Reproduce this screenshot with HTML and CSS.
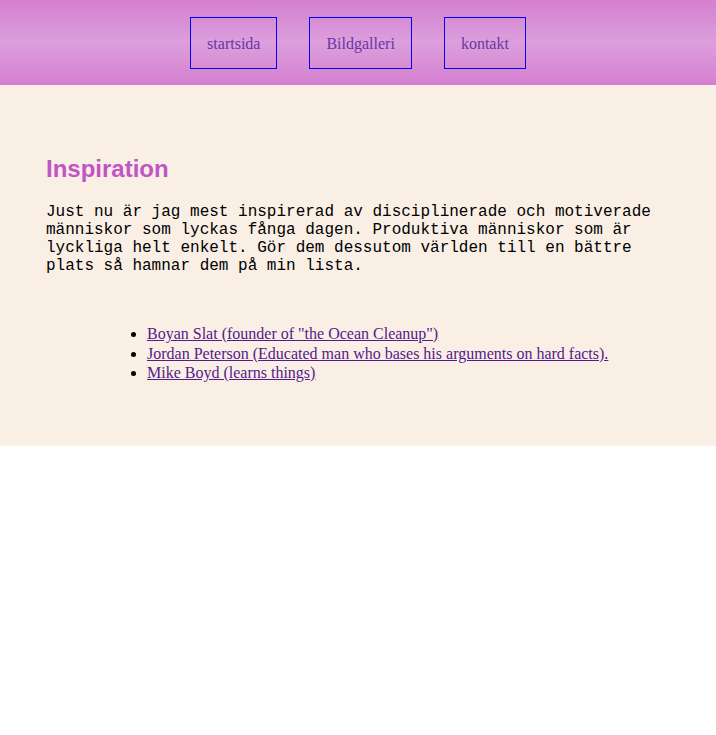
FILE: index.html
```html
<!DOCTYPE html>
<html lang="sv">
<head>
<meta charset="utf-8">
<title>Inspiration</title>
<link rel="stylesheet" href="styles.css">
</head>
<body>
<header class="site-header">
  <nav class="nav">
    <a class="nav-link" href="#">startsida</a>
    <a class="nav-link" href="#">Bildgalleri</a>
    <a class="nav-link" href="#">kontakt</a>
  </nav>
</header>
<main class="content">
  <h2 class="title">Inspiration</h2>
  <p class="intro">Just nu är jag mest inspirerad av disciplinerade och motiverade människor som lyckas fånga dagen. Produktiva människor som är lyckliga helt enkelt. Gör dem dessutom världen till en bättre plats så hamnar dem på min lista.</p>
  <ul class="people">
    <li><a href="#">Boyan Slat (founder of "the Ocean Cleanup")</a></li>
    <li><a href="#">Jordan Peterson (Educated man who bases his arguments on hard facts).</a></li>
    <li><a href="#">Mike Boyd (learns things)</a></li>
  </ul>
</main>
</body>
</html>
```

FILE: styles.css
```css
html, body {
  margin: 0;
  padding: 0;
  background: #ffffff;
}

body {
  font-family: "Liberation Serif", "Times New Roman", serif;
  font-size: 16px;
}

.site-header {
  background: linear-gradient(to bottom, #d47fcf 0%, #dc9fdc 50%, #d47fcf 100%);
  padding: 17px 0 16px;
}

.nav {
  display: flex;
  justify-content: center;
  gap: 32px;
}

.nav-link {
  display: block;
  border: 1px solid #0000ff;
  padding: 17px 16px 15px;
  line-height: 18px;
  color: #6a35a6;
  text-decoration: none;
  font-family: "Liberation Serif", "Times New Roman", serif;
  font-size: 16px;
}

.content {
  background: #faefe5;
  padding: 50px 46px 47px;
}

.title {
  margin: 20px 0;
  font-family: "Liberation Sans", Arial, sans-serif;
  font-size: 24px;
  font-weight: bold;
  color: #c055c4;
}

.intro {
  margin: 16px 0;
  font-family: "Liberation Mono", "Courier New", monospace;
  font-size: 16px;
  line-height: 18px;
  color: #000000;
}

.people {
  margin: 49px 0 16px;
  padding-left: 101px;
  line-height: 19.5px;
}

.people a {
  color: #551a8b;
}
```
